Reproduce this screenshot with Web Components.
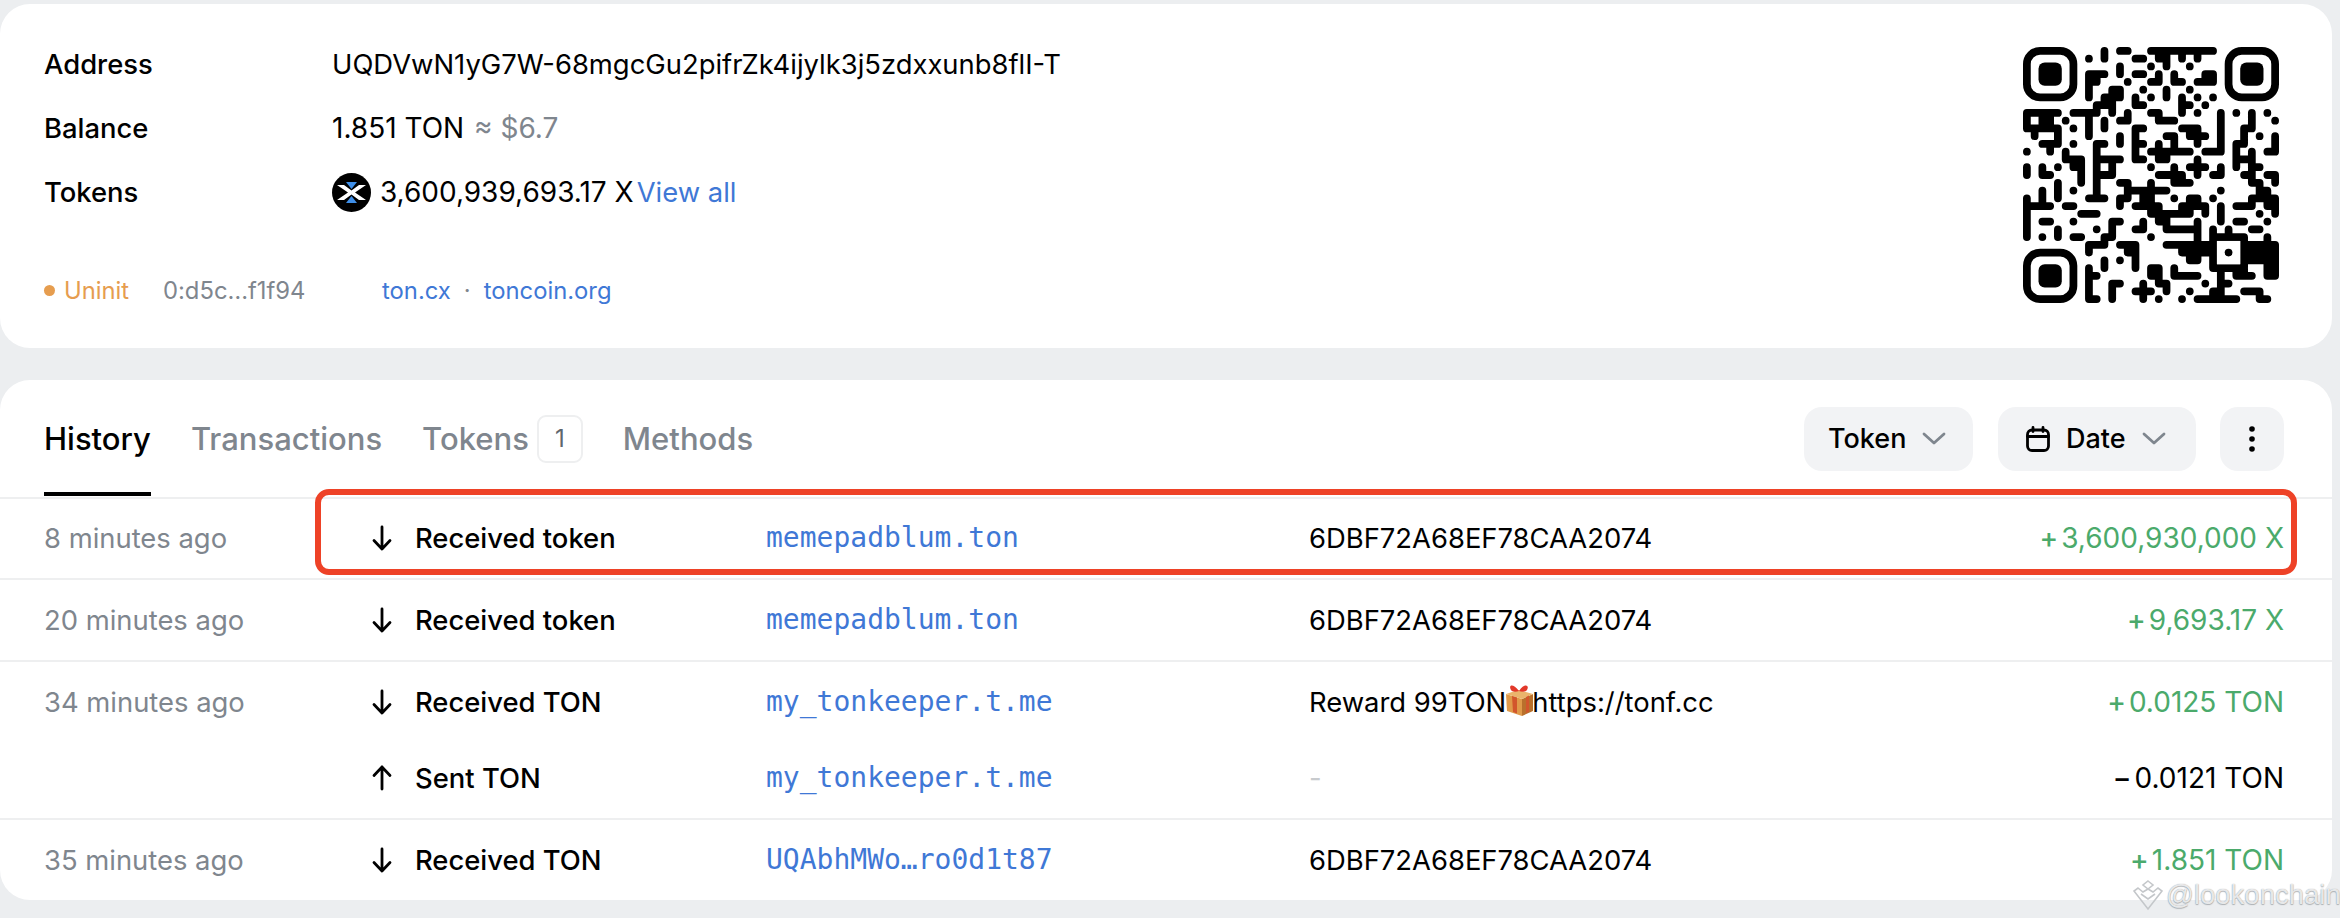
<!DOCTYPE html>
<html><head><meta charset="utf-8"><title>Address</title>
<style>
html,body{margin:0;padding:0;background:#eceef0;height:918px;overflow:hidden}
body{font-family:Inter,"Liberation Sans",sans-serif;font-size:27.4px;color:#000}
</style></head><body>
<ton-app>
  <ton-card slot="a">
    <ton-address>
      <ton-info label="Address">UQDVwN1yG7W-68mgcGu2pifrZk4ijylk3j5zdxxunb8flI-T</ton-info>
      <ton-info label="Balance" num>1.851 TON <ton-muted>≈ $6.7</ton-muted></ton-info>
      <ton-info label="Tokens" num><ton-token-icon></ton-token-icon> 3,600,939,693.17 X<ton-link>View all</ton-link></ton-info>
      <ton-meta slot="meta"></ton-meta>
      <ton-qr slot="qr"></ton-qr>
    </ton-address>
  </ton-card>
  <ton-card slot="b">
    <ton-history>
      <ton-group time="8 minutes ago" first>
        <ton-action dir="in" label="Received token" addr="memepadblum.ton" msg="6DBF72A68EF78CAA2074" sign="+" amount="3,600,930,000 X" green></ton-action>
      </ton-group>
      <ton-group time="20 minutes ago">
        <ton-action dir="in" label="Received token" addr="memepadblum.ton" msg="6DBF72A68EF78CAA2074" sign="+" amount="9,693.17 X" green></ton-action>
      </ton-group>
      <ton-group time="34 minutes ago">
        <ton-action dir="in" label="Received TON" addr="my_tonkeeper.t.me" msg="Reward 99TON" gift="https://tonf.cc" sign="+" amount="0.0125 TON" green></ton-action>
        <ton-action dir="out" label="Sent TON" addr="my_tonkeeper.t.me" msg="-" faint sign="−" amount="0.0121 TON"></ton-action>
      </ton-group>
      <ton-group time="35 minutes ago">
        <ton-action dir="in" label="Received TON" addr="UQAbhMWo…ro0d1t87" msg="6DBF72A68EF78CAA2074" sign="+" amount="1.851 TON" green></ton-action>
      </ton-group>
    </ton-history>
  </ton-card>
</ton-app>
<script>
const def=(name,css,html,init)=>{
  customElements.define(name,class extends HTMLElement{
    constructor(){super();this.attachShadow({mode:'open'});}
    connectedCallback(){
      const a=k=>this.getAttribute(k)||'';
      this.shadowRoot.innerHTML='<style>'+css+'</style>'+(typeof html==='function'?html(a,this):html);
      if(init)init(this.shadowRoot,this);
    }
  });
};
const LINK='#3f78d6',GREY='#7f868e';

def('ton-app',`
:host{display:flex;flex-direction:column;gap:32px;padding:4px 8px 0 0;position:relative;height:914px;box-sizing:content-box}
.wm{position:absolute;left:2133px;top:879px;display:flex;align-items:center;gap:3px;
 font:300 27.5px "Liberation Sans",sans-serif;color:rgba(255,255,255,.8);text-shadow:0 0 1px #8d9196,0 1px 1px rgba(120,125,130,.5);white-space:nowrap}
svg{display:block}
`,`<slot name="a"></slot><slot name="b"></slot>
<div class="wm"><svg width="30" height="32" viewBox="0 0 30 32" fill="none" stroke="#c4c7ca" stroke-width="1.6"><path d="M15 2l5 4-5 4-5-4zM5 9l5 4 5-3 5 3 5-4 4 3-14 18L1 12z"/><path d="M8 15l7 5 7-5"/></svg><span>@lookonchain</span></div>`);

def('ton-card',`:host{display:block;background:#fff;border-radius:30px;overflow:hidden}`,`<slot></slot>`);

def('ton-address',`
:host{display:flex;justify-content:space-between;height:344px;box-sizing:border-box;padding:28px 53px 0 44px}
.info{display:flex;flex-direction:column}
.meta{display:block;margin-top:48px}
.qr{padding-top:15px}
`,`<div class="info"><slot></slot><div class="meta"><slot name="meta"></slot></div></div><div class="qr"><slot name="qr"></slot></div>`);

def('ton-info',`
:host{display:flex;align-items:center;height:64px;white-space:nowrap;font-size:27.4px}
.l{width:288px;flex:none;font-weight:500}
.v{display:flex;align-items:center;gap:0;white-space:pre}
:host([num]) .v{font-size:28px}
`,a=>`<div class="l">${a('label')}</div><div class="v"><slot></slot></div>`);

def('ton-muted',`:host{display:inline;color:${GREY};margin-left:2px}`,`<slot></slot>`);
def('ton-link',`:host{display:inline;color:${LINK};margin-left:3px;font-size:27.4px}`,`<slot></slot>`);

def('ton-token-icon',`:host{display:inline-block;width:39px;height:39px;margin-right:1px}svg{display:block}`,
`<svg viewBox="0 0 39 39" width="39" height="39"><circle cx="19.500" cy="19.500" r="19.500" fill="#000"/>
<path d="M14 9h11l-5.500 7z" fill="#3f8fe8"/><path d="M14 30h11l-5.500-7z" fill="#3f8fe8"/>
<path d="M5 12l11 7.500L5 27h7l7.500-5.500L27 27h7l-11-7.500L34 12h-7l-7.500 5.500L12 12z" fill="#fff"/></svg>`);

def('ton-meta',`
:host{display:flex;align-items:center;height:36px;font-size:23.8px;white-space:nowrap}
.dot{width:11px;height:11px;border-radius:50%;background:#e69d4f;margin-right:9px}
.st{color:#e69d4f;width:99px}
.hash{color:${GREY};width:219px}
.lnk{color:${LINK}}
.sep{color:${GREY};margin:0 13px}
`,`<span class="dot"></span><span class="st">Uninit</span><span class="hash">0:d5c…f1f94</span><span class="lnk">ton.cx</span><span class="sep">·</span><span class="lnk">toncoin.org</span>`);

/* QR */
const QR={0:'10,12,13,16-24',1:'8,10,14,15,17,18,20,22',2:'12,16,18,21',3:'8,9,10,12,14,15,17,19,23,24',4:'8,9,13,16,17,19,20,22,23,24',5:'8,11,12,15,18,21',6:'8,10,11,12,14,16,18,20,22,24',7:'9,10,11,14,15,20,21,23',
8:'0-4,6-9,11,13,16,17,20,22,25,27,29,31',9:'0,2,3,5,8,10,12,13,17,18,19,25,29,32',10:'0-4,6,8,10,14,15,20,21,22,25,28,29',11:'1,4,8,12,14,18,19,21,22,23,25,28,30,32',12:'2,3,4,6,9,10,12,14,15,17,19,22,25,27,28,32',13:'0,3,5,9,14,16-21,23,24,25,27,29,31,32',14:'5,6,7,9-12,14,15,17,18,22,27,28,29',15:'0,2,4,6,7,9,11,16,19,21,22,23,25,27,29,30',16:'0,2,3,7,9,10,11,17-20,22,24,25,28,29,31,32',17:'4,7,9,12,13,16,19,20,21,29,30,32',18:'2,4,6,9,13-18,25,30,31',19:'0,2,4,8,9,10,12,13,15,16,19,21,22,24,29-32',20:'0-3,5,6,12,14-17,20-23,25,27,28,29,31,32',21:'0,7,8,9,16-21,23,25,30,32',22:'0,2,3,6,11,12,15,17,18,22,25,27,28,31',23:'0,4,9,11,14,15,18-22,24,26,29,30',24:'0,2,4,6,7,10,11,16,22,24-28,31',
25:'8,9,10,12,13,14,18-24,28-32',26:'8,13,14,20-24,26,28-32',27:'10,12,14,21,22,24,28-32',28:'8,10,14,16,17,19,24-28,31,32',29:'8,9,16,17,19-22,25,27,28,29,31,32',30:'8,11,12,15,17,18,23,25,26',31:'8,11,14,15,16,18,21,24,25,28,29,30',32:'8,9,11,15,17,20,22-27,30,31'};
function qrPath(){
  const N=33,m=[...Array(N)].map(()=>Array(N).fill(0));
  for(const r in QR)QR[r].split(',').forEach(p=>{const[a,b]=p.split('-').map(Number);for(let c=a;c<=(b??a);c++)m[r][c]=1;});
  const g=(r,c)=>r>=0&&c>=0&&r<N&&c<N&&m[r][c];
  const R=.5;let d='';
  for(let r=0;r<N;r++)for(let c=0;c<N;c++){ if(!m[r][c])continue;
    const t=g(r-1,c),b=g(r+1,c),l=g(r,c-1),rt=g(r,c+1);
    const tl=!t&&!l?R:0,tr=!t&&!rt?R:0,br=!b&&!rt?R:0,bl=!b&&!l?R:0;
    d+=`M${c+tl} ${r}H${c+1-tr}`+(tr?`A${R} ${R} 0 0 1 ${c+1} ${r+tr}`:'')+`V${r+1-br}`+(br?`A${R} ${R} 0 0 1 ${c+1-br} ${r+1}`:'')+`H${c+bl}`+(bl?`A${R} ${R} 0 0 1 ${c} ${r+1-bl}`:'')+`V${r+tl}`+(tl?`A${R} ${R} 0 0 1 ${c+tl} ${r}`:'')+'Z';
  }
  return d;
}
const finder=(x,y)=>`<rect x="${x+.5}" y="${y+.5}" width="6" height="6" rx="1.7" fill="none" stroke="#000" stroke-width="1"/><rect x="${x+2}" y="${y+2}" width="3" height="3" rx=".8" fill="#000"/>`;
def('ton-qr',`:host{display:block;width:256px;height:256px}svg{display:block}`,
()=>`<svg viewBox="0 0 33 33" width="256" height="256"><path fill="#000" d="${qrPath()}"/>${finder(0,0)}${finder(26,0)}${finder(0,26)}
<rect x="25" y="25" width="3" height="3" fill="#fff"/><rect x="26" y="26" width="1" height="1" rx=".5" fill="#000"/></svg>`);

def('ton-history',`
:host{display:block;position:relative;height:520px}
.head{display:flex;align-items:stretch;justify-content:space-between;height:117px;box-sizing:border-box;padding:0 48px 0 44px}
.tabs{display:flex;gap:40px;align-items:stretch;font-size:31px;font-weight:500;color:${GREY}}
.tab{display:flex;align-items:center;position:relative;white-space:nowrap}
.tab.on{color:#000}
.tab.on::after{content:"";position:absolute;left:0;right:0;bottom:1px;height:4px;background:#000}
.badge{display:flex;align-items:center;justify-content:center;width:46px;height:48px;box-sizing:border-box;margin-left:8px;border:2px solid #eeeff0;border-radius:9px;font-size:24px;font-weight:400;color:#5f666d}
.acts{display:flex;align-items:center;gap:24px}
.btn{display:flex;align-items:center;height:64px;box-sizing:border-box;background:#f2f3f5;border-radius:18px;font-weight:500;font-size:27px;white-space:nowrap}
.b1{width:169px;padding-left:24px;gap:16px;margin-right:1px}
.b2{width:198px;padding-left:28px}
.b2 .cal{margin-right:16px}.b2 .chev{margin-left:16px}
.b3{width:64px;justify-content:center}
svg{display:block;flex:none}
.mark{position:absolute;left:315px;top:109px;width:1982px;height:86px;box-sizing:border-box;border:6px solid #ee4227;border-radius:14px;pointer-events:none}
`,`<div class="head"><div class="tabs">
<div class="tab on">History</div><div class="tab">Transactions</div><div class="tab">Tokens<span class="badge">1</span></div><div class="tab">Methods</div></div>
<div class="acts">
<div class="btn b1"><span>Token</span><svg class="chev" width="24" height="14" viewBox="0 0 24 14" fill="none" stroke="#7f868e" stroke-width="2.800" stroke-linecap="round" stroke-linejoin="round"><path d="M2 2l10 9 10-9"/></svg></div>
<div class="btn b2"><svg class="cal" width="24" height="26" viewBox="0 0 24 26" fill="none" stroke="#000" stroke-width="2.800" stroke-linecap="round"><rect x="1.500" y="4" width="21" height="20.500" rx="4.500"/><path d="M1.500 10.500h21M7 1.500v4M17 1.500v4"/></svg><span>Date</span><svg class="chev" width="24" height="14" viewBox="0 0 24 14" fill="none" stroke="#7f868e" stroke-width="2.800" stroke-linecap="round" stroke-linejoin="round"><path d="M2 2l10 9 10-9"/></svg></div>
<div class="btn b3"><svg width="6" height="26" viewBox="0 0 6 26" fill="#000"><circle cx="3" cy="3" r="2.800"/><circle cx="3" cy="13" r="2.800"/><circle cx="3" cy="23" r="2.800"/></svg></div>
</div></div><slot></slot><div class="mark"></div>`);

def('ton-group',`
:host{display:flex;border-top:2px solid #eeeff0;padding:2px 0 2px 44px}
:host([first]){padding-top:1px}
.t{width:328px;flex:none;height:76px;line-height:76px;color:${GREY};font-size:27.4px;white-space:nowrap}
.r{flex:1;min-width:0}
`,a=>`<div class="t">${a('time')}</div><div class="r"><slot></slot></div>`);

const arrow=d=>`<svg width="20" height="26" viewBox="0 0 20 26" fill="none" stroke="#000" stroke-width="2.800" stroke-linecap="round" stroke-linejoin="round">${d==='in'?'<path d="M10 2v22M2 15.500l8 8.500 8-8.500"/>':'<path d="M10 24V2M2 10.500L10 2l8 8.500"/>'}</svg>`;
const gift=`<svg class="gift" width="31" height="34" viewBox="0 0 31 34"><path d="M2 11l16 5v17L3 28z" fill="#e09a4a"/><path d="M18 16l11-5v17l-11 5z" fill="#b9702c"/><path d="M2 11l12-4 15 4-11 5z" fill="#eab46c"/><path d="M8 13l5 1.500v16l-4-1.500z" fill="#d2562c"/><path d="M22 14l3-1.500v16l-3 1.500z" fill="#d2562c"/><path d="M15 8C9 0 4 2 7 7c1 2 5 2 8 1zm0 0c5-8 11-6 8-1-1 2-5 2-8 1z" fill="#e2382a"/></svg>`;
def('ton-action',`
:host{display:grid;grid-template-columns:43px 351px 543px 1fr auto;align-items:center;height:76px;padding-right:48px;white-space:nowrap;font-size:27.4px}
.lb{font-weight:500}
.ad{font:28px "DejaVu Sans Mono",monospace;color:${LINK};position:relative;top:-1px}
.ms{display:flex;align-items:center}
.ms.f{color:#c8cbce}
.gift{margin:-4px -3px 0 -2px}
.am{text-align:right;font-weight:400;font-size:28px}
.am.g{color:#4baa6b}
.sg{margin-right:3px;font-weight:500}
svg{display:block}
`,(a,el)=>`<div>${arrow(a('dir'))}</div><div class="lb">${a('label')}</div><div class="ad">${a('addr')}</div>
<div class="ms ${el.hasAttribute('faint')?'f':''}"><span>${a('msg')}</span>${a('gift')?gift+'<span>'+a('gift')+'</span>':''}</div>
<div class="am ${el.hasAttribute('green')?'g':''}"><span class="sg">${a('sign')}</span>${a('amount')}</div>`);
</script>
</body></html>
